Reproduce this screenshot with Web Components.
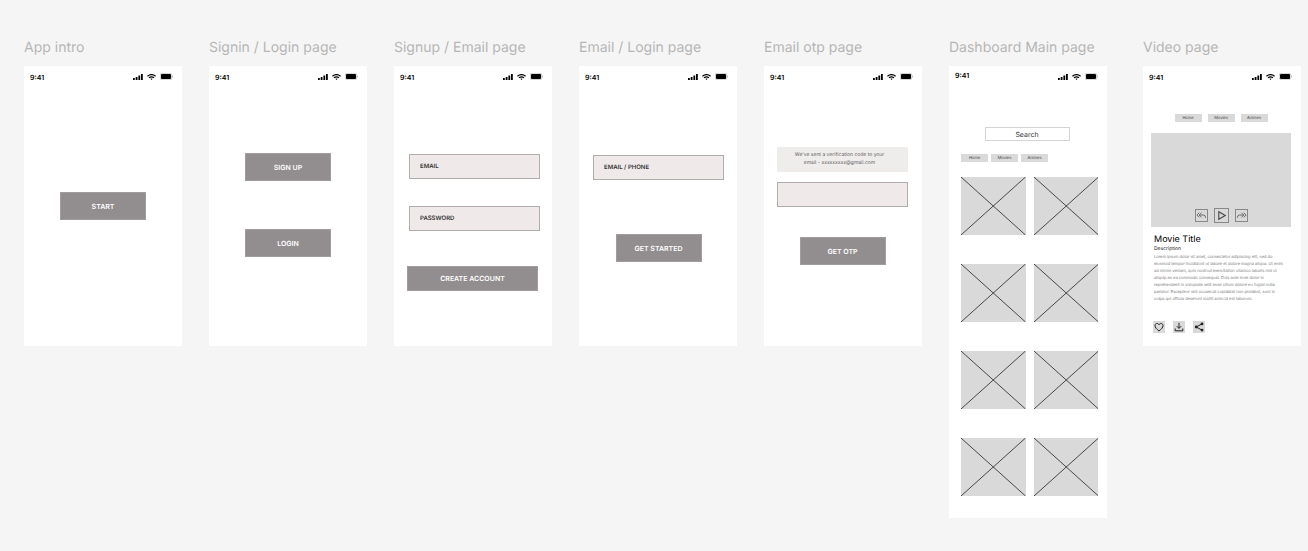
<!DOCTYPE html>
<html lang="en">
<head>
<meta charset="utf-8">
<meta name="viewport" content="width=device-width, initial-scale=1">
<title>Streaming app wireframes</title>
<style>
  body { margin: 0; background: #f5f5f5; color: #000; font-family: Inter, "Liberation Sans", sans-serif; text-rendering: geometricPrecision; }
</style>
</head>
<body>
<wire-board></wire-board>

<script>
const define = (name, html, setup) => {
  const template = document.createElement('template');
  template.innerHTML = html;
  customElements.define(name, class extends HTMLElement {
    constructor() {
      super();
      this.attachShadow({ mode: 'open' }).append(template.content.cloneNode(true));
    }
    connectedCallback() { if (setup) setup(this, this.shadowRoot); }
  });
};

/* Phone status bar: clock, signal, wifi, battery */
define('wire-status', `
<style>
  :host { display: flex; justify-content: space-between; align-items: center; height: 21px; padding: 0 9px 0 6px; }
  span { font-size: 7px; line-height: 9px; font-weight: 600; padding-top: 2px; }
  :host([raised]) span { padding: 0 0 2px; }
  div { display: flex; align-items: center; gap: 4px; }
  svg { display: block; }
</style>
<span>9:41</span>
<div>
  <svg width="10" height="6" viewBox="0 0 10 6" aria-hidden="true"><path d="M0 4h1.8v2H0zM2.7 3h1.8v3H2.7zM5.4 1.6h1.8V6H5.4zM8 0h1.8v6H8z"/></svg>
  <svg width="9" height="6" viewBox="0 0 9 6" fill="none" stroke="#000" aria-hidden="true"><path d="M.4 2.200Q4.500-1 8.600 2.200M2 3.800Q4.500 1.800 7 3.800" stroke-width="1.2"/><path d="M4.500 6 3.400 4.800Q4.500 4 5.600 4.800z" fill="#000" stroke="none"/></svg>
  <svg width="13" height="7" viewBox="0 0 13 7" aria-hidden="true"><rect x=".3" y=".3" width="11.4" height="6.4" rx="1.6" fill="#fff" stroke="#aaa" stroke-width=".6"/><rect x="1" y="1" width="10" height="5" rx="1"/><path d="M12.2 2.5q.7.2.7 1t-.7 1z" fill="#999"/></svg>
</div>`);

/* Artboard: a label above a white screen */
define('wire-frame', `
<style>
  :host { display: block; flex: 1 1 0; min-width: 0; }
  h2 { margin: 0 0 8px; font-size: 14px; line-height: 20px; font-weight: 400; color: #b5b5b5; white-space: nowrap; }
  section { background: #fff; min-height: 280px; display: flex; flex-direction: column; }
</style>
<h2></h2>
<section><wire-status></wire-status><slot></slot></section>`, (host, root) => {
  root.querySelector('h2').textContent = host.getAttribute('label');
  root.querySelector('wire-status').toggleAttribute('raised', host.hasAttribute('raised'));
});

define('wire-button', `
<style>
  :host { display: block; width: 86px; align-self: center; }
  :host([wide]) { width: auto; align-self: stretch; }
  button { display: block; width: 100%; height: 28px; padding: 1px 0 0; border: 1px solid #a19d9e; background: #928d8e; color: #fff;
    font: 600 7px/10px Inter, "Liberation Sans", sans-serif; text-rendering: inherit; }
  :host([wide]) button { height: 25px; padding: 0; }
</style>
<button type="button"><slot></slot></button>`);

define('wire-field', `
<style>
  :host { display: block; }
  input { display: block; box-sizing: border-box; width: 100%; height: 25px; margin: 0; padding: 0 10px; border: 1px solid #b0adad; border-radius: 0;
    background: #efe9e9; color: #333; font: 600 6px/8px Inter, "Liberation Sans", sans-serif; text-rendering: inherit; outline: 0; }
  input::placeholder { color: #333; opacity: 1; }
  :host([search]) input { height: 14px; padding: 0; border: 1px solid #d4d4d4; background: #fff; text-align: center; font-weight: 400; font-size: 7px; }
</style>
<input type="text">`, (host, root) => {
  const input = root.querySelector('input');
  input.placeholder = host.getAttribute('text') || '';
  input.setAttribute('aria-label', host.getAttribute('text') || host.getAttribute('label'));
});

define('wire-tabs', `
<style>
  :host { display: block; }
  nav { display: flex; gap: var(--tab-gap, 3px); }
  a { width: 27px; height: 8px; background: #d9d9d9; color: #444; text-align: center; text-decoration: none; font-size: 4px; line-height: 8px; }
</style>
<nav aria-label="Sections"><a href="#home">Home</a><a href="#movies">Movies</a><a href="#animes">Animes</a></nav>`);

/* Image placeholder: grey box crossed by its diagonals */
define('wire-tile', `
<style>
  :host { display: block; height: 58px; background: #d9d9d9; }
  svg { display: block; width: 100%; height: 100%; }
</style>
<svg viewBox="0 0 65 58" preserveAspectRatio="none" aria-hidden="true"><path d="M0 0 65 58M65 0 0 58" stroke="#222" stroke-width=".8"/></svg>`);

const icons = {
  back: '<path d="M3.500 3 1 5.500 3.500 8M6 3 3.500 5.500 6 8M3.500 5.500H8.500q2 .2 2 3"/>',
  play: '<path d="M3.5 2.5v7L9.500 6z"/>',
  next: '<path d="M8.500 3 11 5.500 8.500 8M6 3l2.500 2.500L6 8M8.500 5.500H3.500q-2 .2-2 3"/>',
  heart: '<path d="M6 10C3.600 8 2 6.600 2 4.600 2 2.400 4.800 1.600 6 3.700 7.200 1.600 10 2.400 10 4.600 10 6.600 8.400 8 6 10z"/>',
  save: '<path d="M6 1.800v5.400M3.800 5.200 6 7.400l2.200-2.200M2.200 7.500v2.300h7.600V7.500"/>',
  share: '<path d="M9 2.900 3.200 6 9 9.100"/><g fill="currentColor" stroke="none"><circle cx="9" cy="2.900" r="1.400"/><circle cx="3.200" cy="6" r="1.400"/><circle cx="9" cy="9.100" r="1.400"/></g>'
};
define('wire-icon', `
<style>
  :host { display: block; }
  button { display: block; box-sizing: border-box; width: 12px; height: 12px; padding: 0; border: 0; background: #d9d9d9; color: #222; }
  svg { display: block; width: 100%; height: 100%; fill: none; stroke: currentColor; stroke-width: 1; }
  :host([boxed]) button { width: 13px; height: 13px; border: 1px solid #888; color: #444; }
  :host([boxed]) svg { stroke-width: .8; }
  :host([large]) button { width: 15px; height: 15px; }
  :host([large]) svg { stroke-width: 1; }
</style>
<button type="button"><svg viewBox="0 0 12 12" aria-hidden="true"></svg></button>`, (host, root) => {
  root.querySelector('svg').innerHTML = icons[host.getAttribute('name')];
  root.querySelector('button').setAttribute('aria-label', host.getAttribute('label'));
});

define('wire-board', `
<style>
  :host { display: block; padding: 38px 7px 33px 24px; }
  main { display: flex; align-items: flex-start; gap: 27px; }
  .last { margin-left: 9px; }
  .body { display: flex; flex-direction: column; }
  .intro { padding-top: 105px; }
  .signin { padding-top: 66px; gap: 48px; }
  .signup { padding: 67px 12px 0 15px; gap: 27px; }
  .signup wire-button { margin: 8px 2px 0 -2px; }
  .login { padding: 68px 13px 0 14px; gap: 54px; }
  .otp { padding: 60px 14px 0 13px; }
  .note { margin: 0 0 10px; padding: 4px 6px 4px 0; background: #efecec; color: #666; font-size: 5px; line-height: 8px; text-align: center; height: 17px; }
  .otp wire-button { margin-top: 30px; }
  .dash { padding: 40px 9px 22px 12px; }
  .dash wire-field { width: 85px; align-self: center; margin: 0 5px 13px 0; }
  .tiles { display: grid; grid-template-columns: 1fr 1fr; gap: 29px 8px; margin-top: 15px; }
  .video { padding: 27px 10px 0 8px; }
  .video wire-tabs { --tab-gap: 6px; align-self: center; }
  .player { display: flex; align-items: center; justify-content: center; gap: 6px; height: 24px; padding-top: 70px; margin: 11px 0 7px; background: #d9d9d9; }
  h3 { margin: 0 3px; font-size: 9px; line-height: 12px; font-weight: 400; }
  h4 { margin: 0 3px; font-size: 5px; line-height: 7px; font-weight: 400; color: #222; }
  .video p { margin: 0 3px; font-size: 4px; line-height: 7px; font-weight: 400; color: #777; white-space: nowrap; }
  .actions { display: flex; gap: 8px; margin: 19px 0 0 2px; }
</style>
<main>
  <wire-frame label="App intro"><div class="body intro"><wire-button>START</wire-button></div></wire-frame>
  <wire-frame label="Signin / Login page"><div class="body signin"><wire-button>SIGN UP</wire-button><wire-button>LOGIN</wire-button></div></wire-frame>
  <wire-frame label="Signup / Email page"><div class="body signup"><wire-field text="EMAIL"></wire-field><wire-field text="PASSWORD"></wire-field><wire-button wide>CREATE ACCOUNT</wire-button></div></wire-frame>
  <wire-frame label="Email / Login page"><div class="body login"><wire-field text="EMAIL / PHONE"></wire-field><wire-button>GET STARTED</wire-button></div></wire-frame>
  <wire-frame label="Email otp page"><div class="body otp"><p class="note">We've sent a verification code to your<br>email - xxxxxxxxx@gmail.com</p><wire-field label="Verification code"></wire-field><wire-button>GET OTP</wire-button></div></wire-frame>
  <wire-frame label="Dashboard Main page" raised><div class="body dash"><wire-field search text="Search"></wire-field><wire-tabs></wire-tabs>
    <div class="tiles"><wire-tile></wire-tile><wire-tile></wire-tile><wire-tile></wire-tile><wire-tile></wire-tile><wire-tile></wire-tile><wire-tile></wire-tile><wire-tile></wire-tile><wire-tile></wire-tile></div></div></wire-frame>
  <wire-frame class="last" label="Video page"><div class="body video"><wire-tabs></wire-tabs>
    <div class="player"><wire-icon boxed name="back" label="Rewind"></wire-icon><wire-icon boxed large name="play" label="Play"></wire-icon><wire-icon boxed name="next" label="Forward"></wire-icon></div>
    <h3>Movie Title</h3><h4>Description</h4>
    <p>Lorem ipsum dolor sit amet, consectetur adipiscing elit, sed do<br>eiusmod tempor incididunt ut labore et dolore magna aliqua. Ut enim<br>ad minim veniam, quis nostrud exercitation ullamco laboris nisi ut<br>aliquip ex ea commodo consequat. Duis aute irure dolor in<br>reprehenderit in voluptate velit esse cillum dolore eu fugiat nulla<br>pariatur. Excepteur sint occaecat cupidatat non proident, sunt in<br>culpa qui officia deserunt mollit anim id est laborum.</p>
    <div class="actions"><wire-icon name="heart" label="Like"></wire-icon><wire-icon name="save" label="Download"></wire-icon><wire-icon name="share" label="Share"></wire-icon></div></div></wire-frame>
</main>`);
</script>
</body>
</html>
